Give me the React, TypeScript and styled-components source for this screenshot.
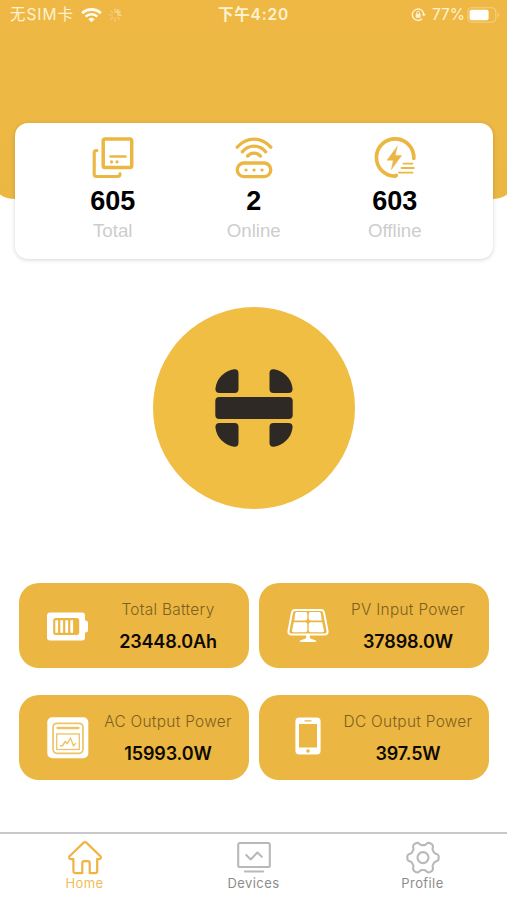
import React from "react";
import styled, { createGlobalStyle } from "styled-components";

const GOLD = "#ebb742";

const GlobalStyle = createGlobalStyle`
  * { box-sizing: border-box; }
  body { margin: 0; background: #fff; overflow: hidden; }
`;

const Screen = styled.div`
  width: 507px;
  height: 900px;
  display: flex;
  flex-direction: column;
  overflow: hidden;
  background: #fff;
  font-family: Inter, "Liberation Sans", "Noto Sans CJK SC", sans-serif;
`;

const Header = styled.header`
  flex: none;
  height: 199px;
  margin: 0 -10px;
  padding: 4px 17px 0 20px;
  background: linear-gradient(#efb845, #ebb743);
  border-radius: 0 0 24px 24px;
`;

const StatusBar = styled.div`
  display: grid;
  grid-template-columns: 1fr auto 1fr;
  align-items: center;
  height: 22px;
  color: #fff2d0;
  font-size: 16px;
  line-height: 22px;
  white-space: nowrap;
`;

const StatusGroup = styled.div<{ $end?: boolean }>`
  display: flex;
  align-items: center;
  justify-content: ${(p) => (p.$end ? "flex-end" : "flex-start")};
`;

const Carrier = styled.span`
  font-size: 15.5px;
  letter-spacing: 0.95px;
  margin-right: 7px;
`;

const Clock = styled.span`
  margin-right: 3px;
  font-size: 15.5px;
  font-weight: 600;
  letter-spacing: 0.8px;
`;

const Percent = styled.span`
  font-size: 15.5px;
  margin: 0 2px 0 6px;
`;

const Spinner = styled.svg`
  margin-left: 6px;
`;

const Summary = styled.section`
  flex: none;
  display: grid;
  grid-template-columns: repeat(3, 141px);
  justify-content: center;
  height: 136.5px;
  margin: -76.5px 14px 0 14.5px;
  padding-top: 14px;
  border-radius: 13px;
  background: #fff;
  box-shadow: 0 1px 4px rgba(0, 0, 0, 0.17);
  font-family: "Liberation Sans", Arial, sans-serif;
`;

const Stat = styled.div`
  display: flex;
  flex-direction: column;
  align-items: center;
`;

const StatValue = styled.div`
  margin-top: 6px;
  font-size: 27px;
  line-height: 32px;
  font-weight: 700;
  color: #000;
`;

const StatLabel = styled.div`
  margin-top: 2px;
  font-size: 18.7px;
  line-height: 24px;
  color: #cdcdcd;
`;

const Emblem = styled.div`
  flex: none;
  align-self: center;
  width: 202px;
  height: 202px;
  margin: 47.5px 0 0 1px;
  border-radius: 50%;
  background: #f0be43;
  display: flex;
  align-items: center;
  justify-content: center;
`;

const Tiles = styled.section`
  flex: none;
  display: grid;
  grid-template-columns: 230px 230px;
  grid-auto-rows: 85px;
  gap: 27px 10px;
  margin: 74.5px 0 0 19px;
`;

const Tile = styled.article`
  display: grid;
  grid-template-columns: 97px 104px;
  background: ${GOLD};
  border-radius: 20px;
`;

const TileIcon = styled.div`
  display: flex;
  align-items: center;
  justify-content: center;
`;

const TileText = styled.div`
  display: flex;
  flex-direction: column;
  align-items: center;
  padding-top: 15px;
  white-space: nowrap;
`;

const TileTitle = styled.div`
  font-size: 15.4px;
  line-height: 24px;
  font-weight: 300;
  letter-spacing: 0.3px;
  color: #7d5f20;
`;

const TileValue = styled.div`
  margin-top: 8px;
  font-size: 18px;
  line-height: 24px;
  font-weight: 600;
  letter-spacing: -0.15px;
  color: #0d0a03;
`;

const Nav = styled.nav`
  flex: none;
  display: grid;
  grid-template-columns: repeat(3, 1fr);
  height: 68px;
  margin-top: auto;
  padding-top: 7px;
  border-top: 2px solid #c8c8c8;
`;

const NavItem = styled.a<{ $active?: boolean }>`
  display: flex;
  flex-direction: column;
  align-items: center;
  font-size: 13px;
  line-height: 16px;
  letter-spacing: 0.4px;
  color: ${(p) => (p.$active ? "#efbd57" : "#8c8c8c")};
`;

const WifiIcon = () => (
  <svg width="21" height="15" viewBox="0 0 21 15" fill="none" stroke="#fffaf0">
    <path d="M1.2 5.2a13.5 13.5 0 0 1 18.6 0" strokeWidth="2.8" />
    <path d="M4.6 8.6a8.5 8.5 0 0 1 11.8 0" strokeWidth="2.6" />
    <path d="M10.5 14.2 7.4 11.2a4.6 4.6 0 0 1 6.2 0Z" fill="#fffaf0" stroke="none" />
  </svg>
);

const SpinnerIcon = () => (
  <Spinner width="14" height="14" viewBox="0 0 14 14" stroke="#fff3d0" strokeWidth="1.2" strokeLinecap="round">
    <path d="M7 1v3" opacity=".55" />
    <path d="M10.2 1.8 8.7 4.3" opacity=".8" />
    <path d="M13 7h-3" opacity=".9" />
    <path d="m12.2 3.8-2.5 1.5" opacity=".8" />
    <path d="m11.5 11-1.8-1.7M7 13v-3M3 11l1.8-1.8M1 7h3M3 3l1.8 1.8" opacity=".35" />
  </Spinner>
);

const LockIcon = () => (
  <svg width="15" height="14" viewBox="0 0 15 14" fill="none" stroke="#fff2d0" strokeWidth="1.4">
    <path d="M11.1 10.7A5.7 5.7 0 1 1 12.7 6.4" />
    <path d="m10.8 6 2 2.5L14.8 6Z" fill="#fff2d0" stroke="none" />
    <rect x="4.7" y="6" width="4.8" height="3.8" rx=".6" fill="#fff2d0" stroke="none" />
    <path d="M5.7 6V4.8a1.4 1.4 0 0 1 2.8 0V6" strokeWidth="1" />
  </svg>
);

const BatteryLevelIcon = () => (
  <svg width="33" height="16" viewBox="0 0 33 16" fill="none">
    <rect x=".8" y=".8" width="28" height="14.4" rx="4" stroke="#f5d084" strokeWidth="1.1" />
    <rect x="2.6" y="2.8" width="19" height="10.4" rx="2" fill="#fff" />
    <path d="M30.7 5.5c1.7.8 1.7 4.2 0 5Z" fill="#f5d084" />
  </svg>
);

const StackIcon = () => (
  <svg width="42" height="42" viewBox="0 0 42 42" fill="none" stroke={GOLD} strokeWidth="3.5" strokeLinecap="round" strokeLinejoin="round">
    <rect x="11.2" y="2" width="28.5" height="28.5" rx="1.8" />
    <path d="M4.9 13.6Q2.2 13.2 2.2 16v21.3q0 2.2 2.2 2.2h21.2q2.6 0 2.4-2.6" strokeWidth="3.1" />
    <path d="M18.5 19.5h15" strokeWidth="2.6" />
    <path d="M19.5 24.8h.1M25 24.8h.1" strokeWidth="3.2" />
  </svg>
);

const RouterIcon = () => (
  <svg width="42" height="42" viewBox="0 0 42 42" fill="none" stroke={GOLD} strokeWidth="3.3" strokeLinecap="round">
    <path d="M4.2 10.2C13.5-.6 28.5-.6 37.8 10.2" />
    <path d="M9.3 14.8c6.5-7.5 16.9-7.5 23.4 0" />
    <path d="M14.6 19c3.7-3.9 9.1-3.9 12.8 0" />
    <rect x="4.2" y="26" width="33.6" height="13.6" rx="6.8" />
    <path d="M13 33h.1M21 33h.1M29 33h.1" strokeWidth="3.2" />
  </svg>
);

const PowerIcon = () => (
  <svg width="42" height="42" viewBox="0 0 42 42" fill="none" stroke={GOLD} strokeLinecap="round">
    <path d="M39.8 21.5A18.7 18.7 0 1 0 21 39.2l1.2-.8" strokeWidth="3.7" />
    <path d="M23.2 9.4 13 23.2h6.3l-1.9 9.2L27.6 18.5h-6.3Z" fill={GOLD} strokeWidth=".5" />
    <path d="M29.5 26.6h9M27.5 31h12.3M25 35.7h13.5" strokeWidth="1.8" />
  </svg>
);

const EmblemIcon = () => (
  <svg width="78" height="78" viewBox="0 0 78 78" fill="#2e2925">
    <path d="M19 .3q4.5-.5 4.5 4V20q0 4-4 4h-15Q0 24 .5 19C1.8 8.500 10.500 1.600 19 .3Z" />
    <path d="M59 .3q-4.500-.5-4.500 4V20q0 4 4 4h15q4.500 0 4-5C76.200 8.500 67.500 1.600 59 .3Z" />
    <rect x=".3" y="28" width="77.4" height="22" rx="4" />
    <path d="M19 77.700q4.500.5 4.500-4V58q0-4-4-4h-15Q0 54 .5 59C1.800 69.500 10.500 76.400 19 77.700Z" />
    <path d="M59 77.700q-4.500.5-4.500-4V58q0-4 4-4h15q4.500 0 4 5C76.200 69.500 67.500 76.400 59 77.700Z" />
  </svg>
);

const BatteryIcon = () => (
  <svg width="42" height="32" viewBox="0 -1 42 32" fill="none">
    <rect x="0" y="1.5" width="38" height="28" rx="3" fill="#fff" />
    <path d="M38 9.5h.5q2.500 0 2.500 2.500v7q0 2.500-2.500 2.500H38Z" fill="#fff" />
    <rect x="6.200" y="7" width="26" height="17" rx="2.500" fill={GOLD} />
    <path d="M9.700 9.300v12.500M14.700 9.300v12.500M19.700 9.300v12.500M24.700 9.300v12.500" stroke="#fff" strokeWidth="2.800" />
  </svg>
);

const SolarIcon = () => (
  <svg width="42" height="36" viewBox="0 0 42 36" fill="none">
    <path d="M8.2 2h25.600q2.600 0 3.200 2.600l3.500 18q.5 3.900-3.300 3.900H4.800q-3.800 0-3.300-3.900l3.500-18Q5.600 2 8.200 2Z" stroke="#fff" strokeWidth="2" />
    <path d="M9.700 3.900h8.600q2 0 2 2v4.500q0 2-2 2H7.200l1-6.900q.3-1.600 1.500-1.600ZM23.700 3.900h8.600q1.200 0 1.500 1.600l1 6.900H23.700q-2 0-2-2V5.900q0-2 2-2ZM6.800 14.200h11.500q2 0 2 2v6q0 2-2 2H6.200Q4.800 24.200 5 22.500ZM23.700 14.200h11.500l1.800 8.300q.2 1.700-1.200 1.700H23.700q-2 0-2-2v-6q0-2 2-2Z" fill="#fff" />
    <path d="M19.200 27h3.600v3.200l6 2.400q1.200 1.400-.8 1.400H14q-2 0-.8-1.400l6-2.400Z" fill="#fff" />
  </svg>
);

const MeterIcon = () => (
  <svg width="42" height="42" viewBox="0 0 42 42" fill="none" stroke="#edc466" strokeWidth="1.3">
    <rect x=".3" y=".3" width="41" height="41" rx="5" fill="#fff" stroke="none" />
    <rect x="6" y="6.3" width="30" height="30" rx="4" strokeWidth="1.7" />
    <path d="M10.500 11h21" strokeWidth="2.300" strokeLinecap="round" />
    <rect x="9.700" y="17" width="22.600" height="15.500" />
    <path d="M13 28.700h2.500l2.700-4.200 2 2.200 3.300-5.500 3 7.500 2.300-2.400" strokeWidth="1.400" />
  </svg>
);

const PhoneIcon = () => (
  <svg width="26" height="42" viewBox="0 0 26 42" fill="none">
    <rect x=".4" y=".4" width="25.2" height="37.2" rx="4" fill="#fff" />
    <rect x="4" y="7" width="18" height="23.5" fill={GOLD} />
    <path d="M10 3.8h6" stroke={GOLD} strokeWidth="1.3" strokeLinecap="round" />
    <circle cx="13" cy="34" r="1.8" fill={GOLD} />
  </svg>
);

const HomeIcon = () => (
  <svg width="34" height="34" viewBox="0 0 34 34" fill="none" stroke="#f1b341" strokeWidth="2.2" strokeLinejoin="round" strokeLinecap="round">
    <path d="M15.7 1.600q1.300-1 2.600 0L32.500 15.200q1.200 2.700-1.500 2.900h-1.800v11.800q0 2.200-2.200 2.200h-5.300V22.400q0-2.200-2-2.200h-3.400q-2 0-2 2.200v9.700H7.600q-2.200 0-2.200-2.200V18.100H3Q.4 17.900 1.500 15.200Z" />
  </svg>
);

const MonitorIcon = () => (
  <svg width="34" height="34" viewBox="0 0 34 34" fill="none" stroke="#b9b9b9" strokeWidth="2.100" strokeLinejoin="round" strokeLinecap="round">
    <rect x="1.2" y="2" width="31.6" height="24" rx="1.500" />
    <path d="M8 30.500h18" strokeWidth="2.200" />
    <path d="m9.200 14 4.500 4.400 6.700-6.800 4.400 4.200" />
  </svg>
);

// Six rounded teeth: the radius swings between tooth tip and valley as the angle turns.
const gearOutline =
  "M" +
  Array.from({ length: 120 }, (_, i) => {
    const angle = (i / 120) * Math.PI * 2;
    const r = 13.9 + 1.9 * Math.tanh(1.8 * Math.cos(6 * angle));
    return `${(17 + r * Math.cos(angle)).toFixed(2)} ${(16.6 + 1.03 * r * Math.sin(angle)).toFixed(2)}`;
  }).join("L") +
  "Z";

const GearIcon = () => (
  <svg width="34" height="34" viewBox="0 0 34 34" fill="none" stroke="#b9b9b9" strokeWidth="2.1" strokeLinejoin="round">
    <circle cx="17" cy="16.600" r="5.500" />
    <path d={gearOutline} />
  </svg>
);

const stats = [
  { label: "Total", value: "605", Icon: StackIcon },
  { label: "Online", value: "2", Icon: RouterIcon },
  { label: "Offline", value: "603", Icon: PowerIcon },
];

const tiles = [
  { title: "Total Battery", value: "23448.0Ah", Icon: BatteryIcon },
  { title: "PV Input Power", value: "37898.0W", Icon: SolarIcon },
  { title: "AC Output Power", value: "15993.0W", Icon: MeterIcon },
  { title: "DC Output Power", value: "397.5W", Icon: PhoneIcon },
];

const tabs = [
  { label: "Home", Icon: HomeIcon, active: true },
  { label: "Devices", Icon: MonitorIcon, active: false },
  { label: "Profile", Icon: GearIcon, active: false },
];

export default function App() {
  return (
    <Screen>
      <GlobalStyle />
      <Header>
        <StatusBar>
          <StatusGroup>
            <Carrier>无SIM卡</Carrier>
            <WifiIcon />
            <SpinnerIcon />
          </StatusGroup>
          <Clock>下午4:20</Clock>
          <StatusGroup $end>
            <LockIcon />
            <Percent>77%</Percent>
            <BatteryLevelIcon />
          </StatusGroup>
        </StatusBar>
      </Header>
      <Summary>
        {stats.map(({ label, value, Icon }) => (
          <Stat key={label}>
            <Icon />
            <StatValue>{value}</StatValue>
            <StatLabel>{label}</StatLabel>
          </Stat>
        ))}
      </Summary>
      <Emblem>
        <EmblemIcon />
      </Emblem>
      <Tiles>
        {tiles.map(({ title, value, Icon }) => (
          <Tile key={title}>
            <TileIcon>
              <Icon />
            </TileIcon>
            <TileText>
              <TileTitle>{title}</TileTitle>
              <TileValue>{value}</TileValue>
            </TileText>
          </Tile>
        ))}
      </Tiles>
      <Nav>
        {tabs.map(({ label, Icon, active }) => (
          <NavItem key={label} $active={active}>
            <Icon />
            {label}
          </NavItem>
        ))}
      </Nav>
    </Screen>
  );
}
